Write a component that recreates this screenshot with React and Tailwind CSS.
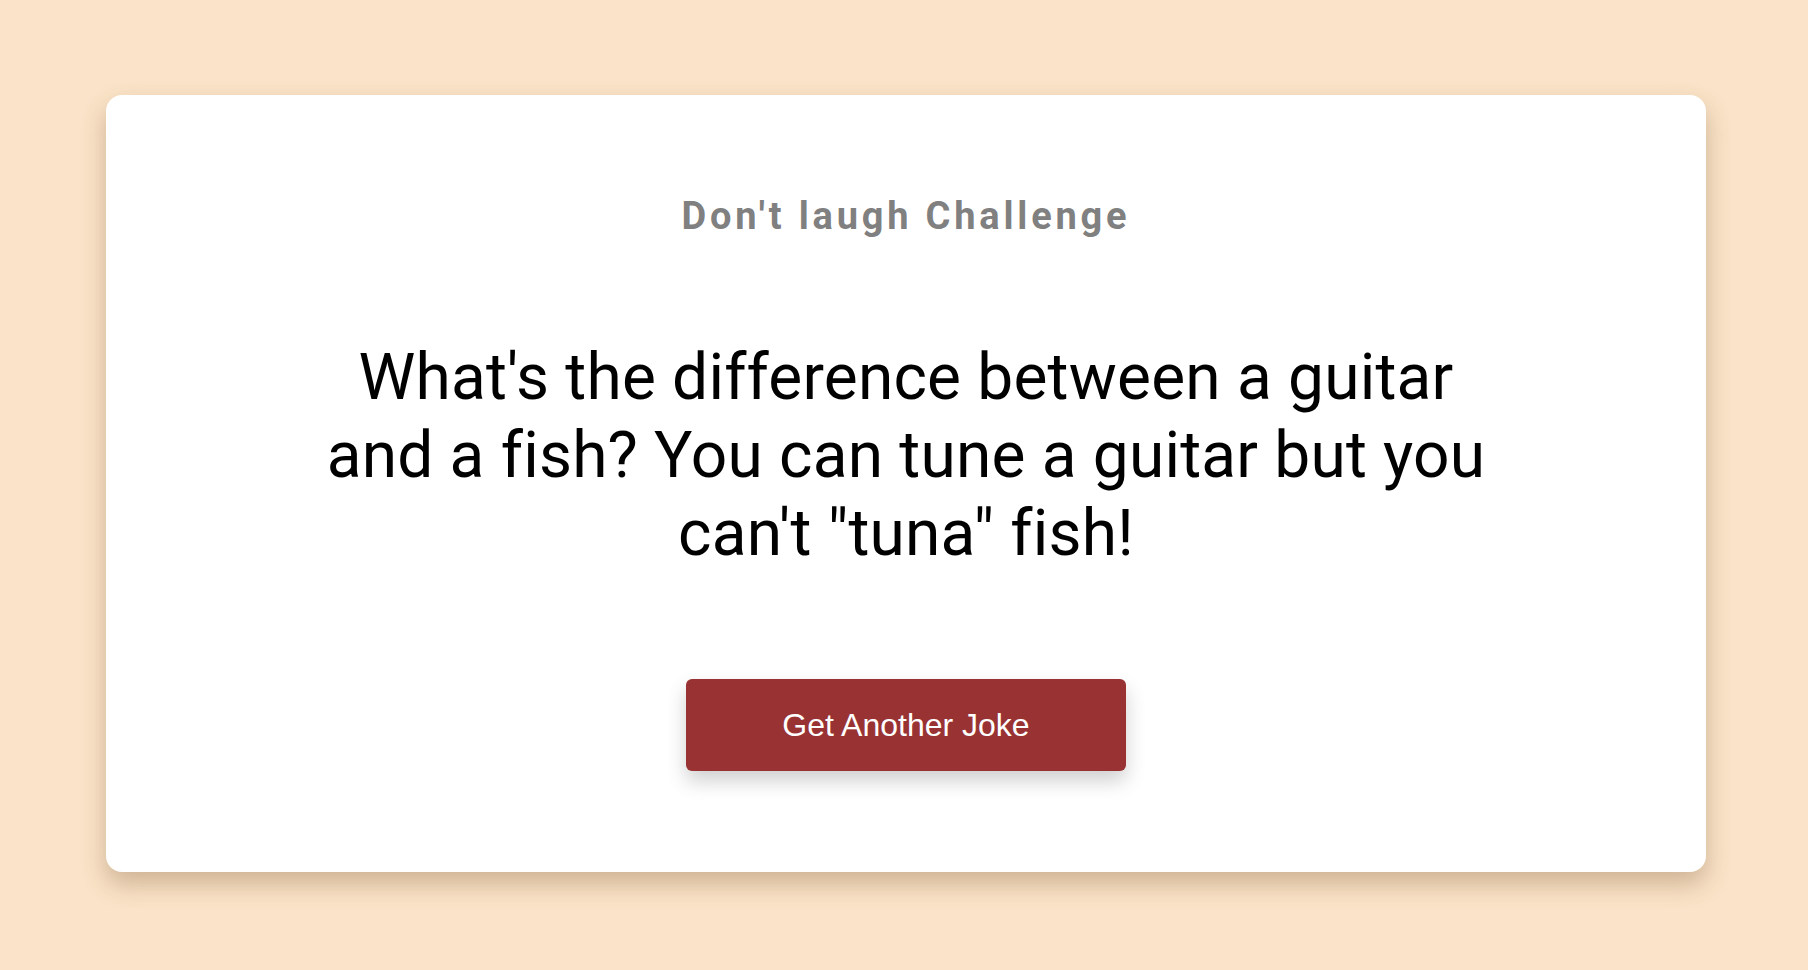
export default function App() {
  return (
    <div className="min-h-[970px] w-full bg-[#fae3c8] pt-[95px] pb-[98px]" style={{ fontFamily: "Roboto, 'Noto Sans', sans-serif" }}>
      <div className="ml-[106px] flex w-[1600px] flex-col items-center rounded-[16px] bg-white pt-[98px] pb-[101px] shadow-[0_12px_24px_rgba(110,70,30,0.3)]">
        <h2 className="text-[38px] font-bold leading-[47px] tracking-[0.1em] text-[#808080]">Don't laugh Challenge</h2>
        <p className="mt-[99px] max-w-[1200px] text-center text-[64px] leading-[78px] tracking-[0.2px] text-black">
          What's the difference between a guitar and a fish? You can tune a guitar but you can't "tuna" fish!
        </p>
        <button className="mt-[106px] h-[92px] w-[440px] rounded-[6px] bg-[#993333] text-[32px] text-white shadow-[0_10px_20px_rgba(0,0,0,0.19)]" style={{ fontFamily: "'Liberation Sans', Arial, sans-serif" }}>
          Get Another Joke
        </button>
      </div>
    </div>
  );
}
